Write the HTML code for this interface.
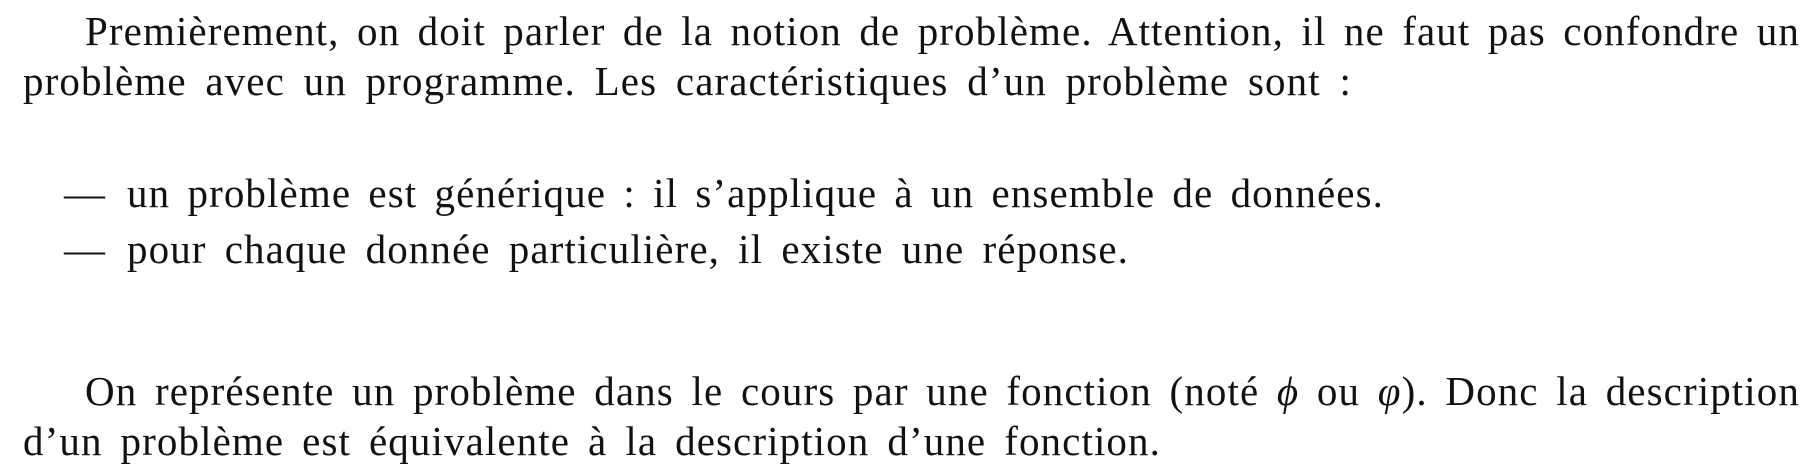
<!DOCTYPE html>
<html><head><meta charset="utf-8"><style>
html,body{margin:0;padding:0;background:#fff;width:1816px;height:470px;overflow:hidden}
body{font-family:"Liberation Serif",serif;font-size:41px;letter-spacing:1.1px;color:#111;position:relative}
.l{position:absolute;height:50px;line-height:50px;white-space:nowrap;text-align:justify;text-align-last:justify}
.d{position:absolute;line-height:50px;height:50px;left:64px;letter-spacing:0}
</style></head><body>
<div class="l" style="left:85px;width:1715px;top:6px">Premièrement, on doit parler de la notion de problème. Attention, il ne faut pas confondre un</div>
<div class="l" style="left:23px;width:1329px;top:56px">problème avec un programme. Les caractéristiques d’un problème sont :</div>
<div class="d" style="top:168px">—</div>
<div class="l" style="left:127px;width:1257px;top:168px">un problème est générique : il s’applique à un ensemble de données.</div>
<div class="d" style="top:224px">—</div>
<div class="l" style="left:127px;width:1002px;top:224px">pour chaque donnée particulière, il existe une réponse.</div>
<div class="l" style="left:85px;width:1715px;top:366px">On représente un problème dans le cours par une fonction (noté <i>ϕ</i> ou <i>φ</i>). Donc la description</div>
<div class="l" style="left:23px;width:1138px;top:416px">d’un problème est équivalente à la description d’une fonction.</div>
</body></html>
